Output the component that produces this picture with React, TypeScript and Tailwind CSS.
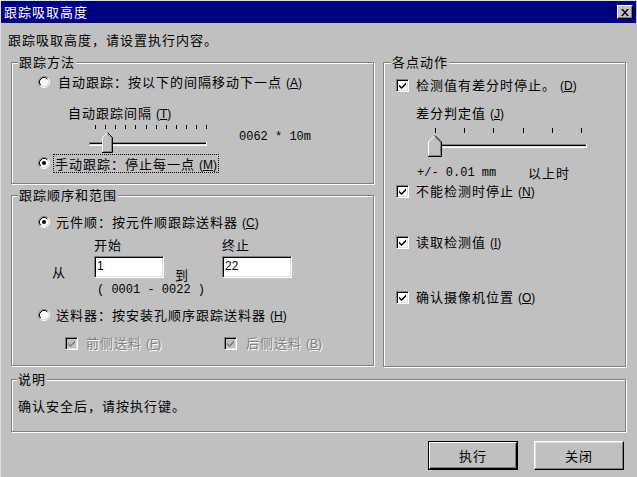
import type { ReactNode } from "react";

const mono = "font-['Liberation_Mono',monospace] text-[12px] tracking-normal";
const disabledText = "text-[#808080] [text-shadow:1px_1px_0_#fff]";

const Key = ({ k }: { k: string }) => (
  <span className="font-['Liberation_Sans',sans-serif] text-[12px] tracking-normal ml-[4px]">
    (<u>{k}</u>)
  </span>
);

const Radio = ({ checked = false }: { checked?: boolean }) => (
  <svg width="12" height="12" viewBox="0 0 12 12" className="shrink-0">
    <circle cx="6" cy="6" r="4.5" fill="#fff" />
    <path d="M2.11 9.89 A5.5 5.5 0 0 1 9.89 2.11" stroke="#808080" fill="none" />
    <path d="M9.89 2.11 A5.5 5.5 0 0 1 2.11 9.89" stroke="#fff" fill="none" />
    <path d="M2.82 9.18 A4.5 4.5 0 0 1 9.18 2.82" stroke="#000" fill="none" />
    <path d="M9.18 2.82 A4.5 4.5 0 0 1 2.82 9.18" stroke="#dfdfdf" fill="none" />
    {checked && <circle cx="6" cy="6" r="2" fill="#000" />}
  </svg>
);

const Check = ({ disabled = false }: { disabled?: boolean }) => (
  <div
    className={`w-[13px] h-[13px] shrink-0 flex items-center justify-center border border-t-[#808080] border-l-[#808080] border-r-white border-b-white shadow-[inset_1px_1px_#000,inset_-1px_-1px_#dfdfdf] ${
      disabled ? "bg-[#c0c0c0]" : "bg-white"
    }`}
  >
    <svg width="7" height="7" viewBox="0 0 7 7">
      <path d="M0 2.5 L2.5 5 L7 0.5 L7 2.8 L2.5 7 L0 4.6 Z" fill={disabled ? "#808080" : "#000"} />
    </svg>
  </div>
);

const Thumb = ({ x, y, w, h }: { x: number; y: number; w: number; h: number }) => {
  const mid = x + w / 2;
  const sh = y + w / 2;
  return (
    <g>
      <path d={`M${x} ${sh} L${mid} ${y} L${x + w} ${sh} L${x + w} ${y + h} L${x} ${y + h} Z`} fill="#c0c0c0" />
      <polyline points={`${x + 0.5},${y + h} ${x + 0.5},${sh} ${mid},${y + 0.5}`} stroke="#fff" fill="none" />
      <polyline points={`${mid},${y + 0.5} ${x + w - 0.5},${sh} ${x + w - 0.5},${y + h - 0.5} ${x},${y + h - 0.5}`} stroke="#000" fill="none" />
      <polyline points={`${mid},${y + 1.9} ${x + w - 1.5},${sh + 0.6} ${x + w - 1.5},${y + h - 1.5} ${x + 1},${y + h - 1.5}`} stroke="#808080" fill="none" />
    </g>
  );
};

const Track = ({ x1, x2, y }: { x1: number; x2: number; y: number }) => (
  <g>
    <rect x={x1} y={y} width={x2 - x1} height="1" fill="#808080" />
    <rect x={x1 + 1} y={y + 1} width={x2 - x1 - 2} height="1" fill="#000" />
    <rect x={x1 + 1} y={y + 2} width={x2 - x1 - 2} height="1" fill="#dfdfdf" />
    <rect x={x1} y={y + 3} width={x2 - x1} height="1" fill="#fff" />
    <rect x={x1} y={y} width="1" height="3" fill="#808080" />
    <rect x={x2 - 1} y={y} width="1" height="4" fill="#fff" />
  </g>
);

const IntervalSlider = () => (
  <svg width="120" height="32" viewBox="0 0 120 32" className="shrink-0">
    {Array.from({ length: 12 }).map((_, i) => (
      <rect key={i} x={Math.round(6 + i * 10.1)} y="4" width="1" height="4" fill="#000" />
    ))}
    <Track x1={0} x2={118} y={21} />
    <Thumb x={13} y={11} w={11} h={21} />
  </svg>
);

const DiffSlider = () => (
  <svg width="160" height="34" viewBox="0 0 160 34" className="shrink-0">
    {Array.from({ length: 6 }).map((_, i) => (
      <rect key={i} x={Math.round(7 + i * 29.2)} y="4" width="1" height="5" fill="#000" />
    ))}
    <Track x1={1} x2={159} y={20} />
    <Thumb x={0} y={11} w={14} h={22} />
  </svg>
);

const GroupBox = ({
  label,
  className,
  legendClass = "left-[6px]",
  children,
}: {
  label: string;
  className?: string;
  legendClass?: string;
  children?: ReactNode;
}) => (
  <div className={`relative border border-[#808080] shadow-[inset_1px_1px_#fff,1px_1px_#fff] ${className ?? ""}`}>
    <span className={`absolute -top-[9px] ${legendClass} px-[1px] bg-[#c0c0c0] leading-[16px]`}>{label}</span>
    {children}
  </div>
);

const Field = ({ value }: { value: string }) => (
  <div className="w-[70px] h-[22px] shrink-0 bg-white border border-t-[#808080] border-l-[#808080] border-r-white border-b-white shadow-[inset_1px_1px_#000,inset_-1px_-1px_#dfdfdf] pl-[2px] pt-[2px] font-['Liberation_Sans',sans-serif] text-[12px] leading-[14px] tracking-normal">
    {value}
  </div>
);

const App = () => {
  return (
    <div className="w-[637px] h-[477px] overflow-hidden bg-[#c0c0c0] shadow-[inset_1px_1px_#dfdfdf] font-['Noto_Sans_CJK_SC',sans-serif] text-[13px] tracking-[1px] leading-[16px] text-black">
      <div className="mx-px mt-px h-[22px] w-[635px] bg-[#000080] flex items-center justify-between">
        <span className="pl-[3px] text-white">跟踪吸取高度</span>
        <div className="mr-[3px] w-[16px] h-[14px] flex items-center justify-center bg-[#c0c0c0] border border-t-white border-l-white border-r-black border-b-black shadow-[inset_-1px_-1px_#808080]">
          <svg width="8" height="7" viewBox="0 0 8 7">
            <path d="M0 0 L2 0 L4 2.4 L6 0 L8 0 L5 3.5 L8 7 L6 7 L4 4.6 L2 7 L0 7 L3 3.5 Z" fill="#000" />
          </svg>
        </div>
      </div>

      <p className="ml-[8px] mt-[9px] h-[16px]">跟踪吸取高度，请设置执行内容。</p>

      <div className="ml-[11px] w-[615px]">
        <div className="mt-[14px] flex items-start gap-[9px]">
          <div className="w-[363px] flex flex-col">
            <GroupBox label="跟踪方法" className="h-[122px]">
              <div className="flex items-center ml-[26px] mt-[11px] h-[16px]">
                <Radio />
                <span className="ml-[8px]">
                  自动跟踪：按以下的间隔移动下一点
                  <Key k="A" />
                </span>
              </div>
              <div className="ml-[56px] mt-[15px] h-[16px]">
                自动跟踪间隔
                <Key k="T" />
              </div>
              <div className="flex items-center ml-[77px] h-[32px]">
                <IntervalSlider />
                <span className={`ml-[30px] ${mono}`}>0062 * 10m</span>
              </div>
              <div className="flex items-center ml-[26px] h-[20px]">
                <Radio checked />
                <span className="ml-[3px] h-[19px] leading-[17px] px-[1px] border border-dotted border-black">
                  手动跟踪：停止每一点
                  <Key k="M" />
                </span>
              </div>
            </GroupBox>

            <GroupBox label="跟踪顺序和范围" className="mt-[11px] h-[171px]">
              <div className="flex items-center ml-[26px] mt-[18px] h-[16px]">
                <Radio checked />
                <span className="ml-[6px]">
                  元件顺：按元件顺跟踪送料器
                  <Key k="C" />
                </span>
              </div>
              <div className="flex ml-[82px] mt-[7px] h-[16px]">
                <span className="w-[128px]">开始</span>
                <span>终止</span>
              </div>
              <div className="flex items-start ml-[40px] mt-[3px] h-[22px]">
                <span className="w-[42px] mt-[8px]">从</span>
                <Field value="1" />
                <span className="w-[47px] ml-[11px] mt-[11px]">到</span>
                <Field value="22" />
              </div>
              <div className={`ml-[85px] mt-[4px] h-[16px] leading-[16px] ${mono}`}>( 0001 - 0022 )</div>
              <div className="flex items-center ml-[26px] mt-[9px] h-[16px]">
                <Radio />
                <span className="ml-[6px]">
                  送料器：按安装孔顺序跟踪送料器
                  <Key k="H" />
                </span>
              </div>
              <div className="flex items-center ml-[53px] mt-[12px] h-[16px]">
                <div className="w-[159px] flex items-center">
                  <Check disabled />
                  <span className={`ml-[8px] ${disabledText}`}>
                    前侧送料
                    <Key k="F" />
                  </span>
                </div>
                <Check disabled />
                <span className={`ml-[9px] ${disabledText}`}>
                  后侧送料
                  <Key k="B" />
                </span>
              </div>
            </GroupBox>
          </div>

          <GroupBox label="各点动作" legendClass="left-[7px]" className="w-[243px] h-[305px]">
            <div className="flex items-center ml-[12px] mt-[14px] h-[16px]">
              <Check />
              <span className="ml-[7px]">
                检测值有差分时停止。
                <Key k="D" />
              </span>
            </div>
            <div className="ml-[32px] mt-[12px] h-[16px]">
              差分判定值
              <Key k="J" />
            </div>
            <div className="ml-[44px] mt-[3px] h-[34px]">
              <DiffSlider />
            </div>
            <div className="flex items-center ml-[33px] mt-[7px] h-[16px]">
              <span className={`w-[111px] ${mono}`}>+/- 0.01 mm</span>
              <span>以上时</span>
            </div>
            <div className="flex items-center ml-[12px] mt-[2px] h-[16px]">
              <Check />
              <span className="ml-[7px]">
                不能检测时停止
                <Key k="N" />
              </span>
            </div>
            <div className="flex items-center ml-[12px] mt-[35px] h-[16px]">
              <Check />
              <span className="ml-[7px]">
                读取检测值
                <Key k="I" />
              </span>
            </div>
            <div className="flex items-center ml-[12px] mt-[39px] h-[16px]">
              <Check />
              <span className="ml-[7px]">
                确认摄像机位置
                <Key k="O" />
              </span>
            </div>
          </GroupBox>
        </div>

        <GroupBox label="说明" legendClass="left-[5px]" className="mt-[12px] h-[53px]">
          <p className="ml-[6px] mt-[18px]">确认安全后，请按执行键。</p>
        </GroupBox>

        <div className="flex justify-end gap-[16px] mr-[2px] mt-[9px]">
          <button className="w-[90px] h-[29px] border border-black">
            <div className="w-full h-full flex items-center justify-center border border-t-white border-l-white border-r-black border-b-black shadow-[inset_-1px_-1px_#808080]">
              执行
            </div>
          </button>
          <button className="w-[90px] h-[29px] flex items-center justify-center border border-t-white border-l-white border-r-black border-b-black shadow-[inset_-1px_-1px_#808080,inset_1px_1px_#dfdfdf]">
            关闭
          </button>
        </div>
      </div>
    </div>
  );
};

export default App;
